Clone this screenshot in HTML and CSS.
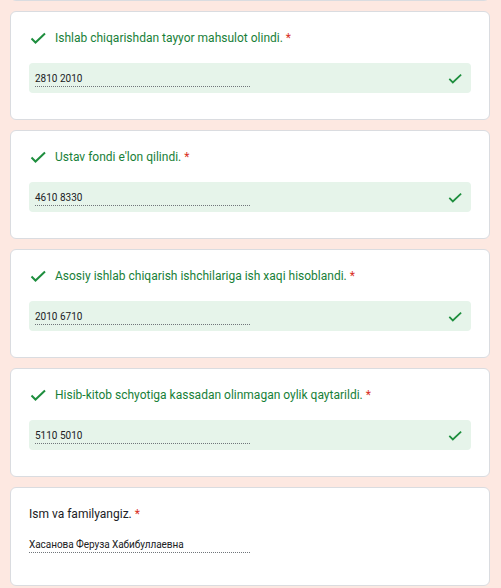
FILE: index.html
```html
<!DOCTYPE html>
<html lang="en">
<head>
    <meta charset="UTF-8">
    <meta name="viewport" content="width=device-width, initial-scale=1.0">
    <title>Test</title>
    <link rel="stylesheet" href="styles.css">
</head>
<body>

    <div class="form-list">
        <!-- previous question, scrolled out of view -->
        <div class="card card-prev"></div>

        <div class="card">
            <div class="title correct">
                <svg class="mark" viewBox="0 0 16 12"><polyline points="1.5,6.5 5.5,10.5 15,1.5"/></svg>
                <span>Ishlab chiqarishdan tayyor mahsulot olindi. <span class="req">*</span></span>
            </div>
            <div class="answer correct-box">
                <span class="value">2810 2010</span>
                <svg class="mark-right" viewBox="0 0 16 12"><polyline points="1.5,6.5 5.5,10.5 15,1.5"/></svg>
            </div>
        </div>

        <div class="card">
            <div class="title correct">
                <svg class="mark" viewBox="0 0 16 12"><polyline points="1.5,6.5 5.5,10.5 15,1.5"/></svg>
                <span>Ustav fondi e'lon qilindi. <span class="req">*</span></span>
            </div>
            <div class="answer correct-box">
                <span class="value">4610 8330</span>
                <svg class="mark-right" viewBox="0 0 16 12"><polyline points="1.5,6.5 5.5,10.5 15,1.5"/></svg>
            </div>
        </div>

        <div class="card">
            <div class="title correct">
                <svg class="mark" viewBox="0 0 16 12"><polyline points="1.5,6.5 5.5,10.5 15,1.5"/></svg>
                <span>Asosiy ishlab chiqarish ishchilariga ish xaqi hisoblandi. <span class="req">*</span></span>
            </div>
            <div class="answer correct-box">
                <span class="value">2010 6710</span>
                <svg class="mark-right" viewBox="0 0 16 12"><polyline points="1.5,6.5 5.5,10.5 15,1.5"/></svg>
            </div>
        </div>

        <div class="card">
            <div class="title correct">
                <svg class="mark" viewBox="0 0 16 12"><polyline points="1.5,6.5 5.5,10.5 15,1.5"/></svg>
                <span>Hisib-kitob schyotiga kassadan olinmagan oylik qaytarildi. <span class="req">*</span></span>
            </div>
            <div class="answer correct-box">
                <span class="value">5110 5010</span>
                <svg class="mark-right" viewBox="0 0 16 12"><polyline points="1.5,6.5 5.5,10.5 15,1.5"/></svg>
            </div>
        </div>

        <div class="card">
            <div class="title">
                <span>Ism va familyangiz. <span class="req">*</span></span>
            </div>
            <div class="answer plain">
                <span class="value name">Хасанова Феруза Хабибуллаевна</span>
            </div>
        </div>
    </div>

</body>
</html>
```

FILE: styles.css
```css
body {
    margin: 0;
    background-color: #fde8e1;
    font-family: 'Roboto', 'Liberation Sans', sans-serif;
    overflow: hidden;
}

.form-list {
    width: 480px;
    margin-left: 10px;
    margin-top: -108px;
}

.card {
    background-color: #fff;
    border: 1px solid #dadce0;
    border-radius: 6px;
    padding: 17px 18px 26px 18px;
    margin-bottom: 10px;
}

.card-prev {
    height: 64px;
}

.title {
    display: flex;
    align-items: center;
    height: 18px;
    font-size: 12px;
    color: #202124;
}

.title.correct {
    color: #188038;
}

.req {
    color: #d93025;
}

.mark {
    width: 16px;
    height: 12px;
    margin-left: 1px;
    margin-right: 9px;
    fill: none;
    stroke: #1e8e3e;
    stroke-width: 2;
}

.answer {
    margin-top: 16px;
    height: 30px;
    display: flex;
    align-items: center;
    justify-content: space-between;
    font-size: 10px;
    color: #202124;
}

.correct-box {
    background-color: #e6f4ea;
    border-radius: 4px;
    padding: 0 9px 0 6px;
}

.value {
    display: block;
    width: 215px;
    line-height: 14px;
    padding-top: 2px;
    border-bottom: 1px dotted #70757a;
}

.plain {
    margin-top: 6px;
}

.name {
    width: 221px;
    letter-spacing: -0.05px;
}

.mark-right {
    width: 14px;
    height: 11px;
    fill: none;
    stroke: #1e8e3e;
    stroke-width: 2;
}
```
